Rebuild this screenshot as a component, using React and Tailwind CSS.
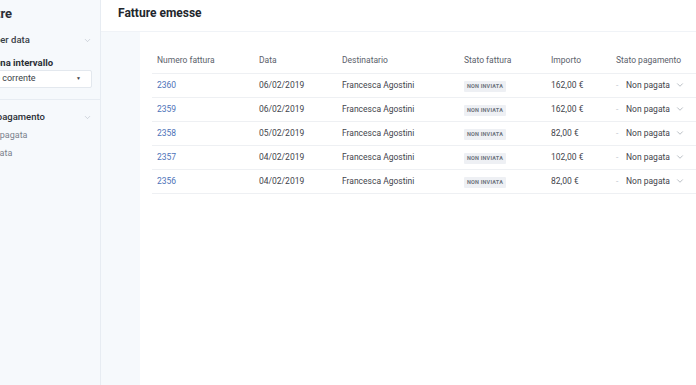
import React from 'react';
import { ChevronDown } from 'lucide-react';

const rows = [
    { num: '2360', date: '06/02/2019', name: 'Francesca Agostini', amount: '162,00 €' },
    { num: '2359', date: '06/02/2019', name: 'Francesca Agostini', amount: '162,00 €' },
    { num: '2358', date: '05/02/2019', name: 'Francesca Agostini', amount: '82,00 €' },
    { num: '2357', date: '04/02/2019', name: 'Francesca Agostini', amount: '102,00 €' },
    { num: '2356', date: '04/02/2019', name: 'Francesca Agostini', amount: '82,00 €' },
];

function Sidebar() {
    return (
        <aside className="w-[101px] shrink-0 h-full bg-[#f6f9fc] border-r border-[#e7ecf2] overflow-hidden">
            <div className="w-[140px] -ml-[40px] pr-[8px] pt-[6px]">
                <div className="ml-[22px] h-[16px] leading-[16px] text-[13px] font-bold text-[#2b2f36]">Filtre</div>
                <div className="mt-[10px] ml-[11px] h-[16px] flex items-center justify-between text-[9.5px] font-medium text-[#3a3f47]">
                    <span>Filtra per data</span>
                    <ChevronDown size={9} strokeWidth={1.5} className="text-[#b3bac4]" />
                </div>
                <div className="mt-[8px] ml-[9px] h-[14px] leading-[14px] text-[9.5px] font-bold text-[#2b2f36]">Seleziona intervallo</div>
                <div className="ml-[4px] h-[18px] bg-white border border-[#e3e8ee] rounded-[2px] flex items-center justify-between pl-[13px] pr-[10px] text-[9px] text-[#3a3f47]">
                    <span>Mese corrente</span>
                    <span className="text-[5px] text-[#444]">▼</span>
                </div>
                <div className="mt-[11px] border-t border-[#e7ecf2] w-[200px]" />
                <div className="mt-[9px] ml-[12px] h-[16px] flex items-center justify-between text-[9.5px] font-medium text-[#2b2f36]">
                    <span>Stato pagamento</span>
                    <ChevronDown size={9} strokeWidth={1.5} className="text-[#b3bac4]" />
                </div>
                <div className="mt-[3px] ml-[21px] h-[14px] leading-[14px] text-[9px] text-[#7b828c]">Non pagata</div>
                <div className="mt-[4px] ml-[24px] h-[14px] leading-[14px] text-[9px] text-[#7b828c]">Pagata</div>
            </div>
        </aside>
    );
}

function InvoiceTable() {
    return (
        <table className="w-[560px] border-collapse table-fixed text-[8.5px]">
            <colgroup>
                <col className="w-[107px]" />
                <col className="w-[83px]" />
                <col className="w-[122px]" />
                <col className="w-[87px]" />
                <col className="w-[65px]" />
                <col className="w-[96px]" />
            </colgroup>
            <thead>
                <tr className="h-[24px] border-b border-[#eef0f3] text-left text-[#5b616b]">
                    <th className="font-normal pl-[5px]">Numero fattura</th>
                    <th className="font-normal">Data</th>
                    <th className="font-normal">Destinatario</th>
                    <th className="font-normal">Stato fattura</th>
                    <th className="font-normal">Importo</th>
                    <th className="font-normal">Stato pagamento</th>
                </tr>
            </thead>
            <tbody className="text-[#3f444c]">
                {rows.map((r) => (
                    <tr key={r.num} className="h-[24px] border-b border-[#eef0f3]">
                        <td className="pl-[5px] text-[#4d72b8]">{r.num}</td>
                        <td>{r.date}</td>
                        <td>{r.name}</td>
                        <td>
                            <span className="inline-block bg-[#eef0f4] text-[#6d737c] text-[5.5px] font-bold tracking-[0.2px] px-[3px] leading-[11px] rounded-[1px]">NON INVIATA</span>
                        </td>
                        <td>{r.amount}</td>
                        <td>
                            <div className="flex items-center">
                                <span className="text-[#c5cad1] w-[10px]">-</span>
                                <span>Non pagata</span>
                                <ChevronDown size={10} strokeWidth={1.5} className="ml-[5px] text-[#8f96a0]" />
                            </div>
                        </td>
                    </tr>
                ))}
            </tbody>
        </table>
    );
}

export default function App() {
    return (
        <div className="flex w-[696px] h-[385px] overflow-hidden bg-white font-['Roboto',sans-serif]">
            <Sidebar />
            <main className="flex-1 min-w-0 flex flex-col">
                <header className="h-[32px] shrink-0 pt-[5px] pl-[17px] bg-white border-b border-[#f0f3f7]">
                    <h1 className="text-[12px] leading-[16px] font-bold text-[#22262c]">Fatture emesse</h1>
                </header>
                <div className="flex flex-1 min-h-0">
                    <div className="w-[39px] shrink-0 bg-[#f6f9fc]" />
                    <div className="flex-1 bg-white pt-[17px] pl-[12px] overflow-hidden">
                        <InvoiceTable />
                    </div>
                </div>
            </main>
        </div>
    );
}
